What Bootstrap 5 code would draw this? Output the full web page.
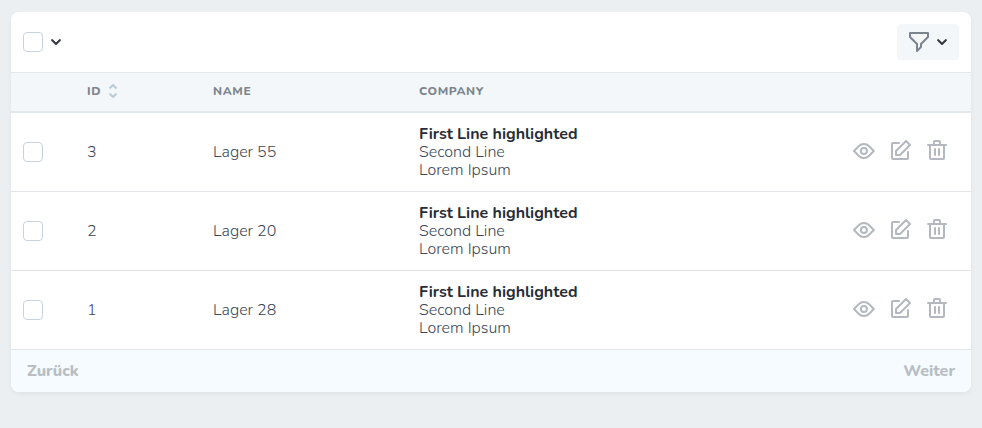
<!DOCTYPE html>
<html lang="de">
<head>
<meta charset="utf-8">
<meta name="viewport" content="width=device-width, initial-scale=1">
<title>Lager</title>
<link href="https://cdn.jsdelivr.net/npm/bootstrap@5.3.0/dist/css/bootstrap.min.css" rel="stylesheet">
<style>
body { background: #ebeff2; font-family: Nunito, "Open Sans", "Noto Sans", sans-serif; font-size: 16px; line-height: 18px; color: #3c4655; padding: 12px 11px; }
.panel { border-radius: 8px; background: #fff; box-shadow: 0 2px 4px rgba(0,0,0,.05); overflow: hidden; }
.toolbar { padding: 12px; }
.panel .form-check-input { width: 20px; height: 20px; margin: 0; border: 1px solid #c9d3dd; border-radius: 4px; float: none; display: block; }
.plain-btn { border: 0; background: transparent; padding: 0; display: flex; align-items: center; color: #3c4b5f; }
.filter-btn { background: #f3f7fa; border-radius: 4px; height: 36px; padding: 0 12px; gap: 8px; }
.panel svg { display: block; fill: currentColor; }
.filter-icon { color: #7c858e; }
.caret { color: #35393f; }
.data { table-layout: fixed; line-height: 18px; color: #3c4655; font-weight: 300; }
.data th { background: #f3f7fa; border-top: 1px solid #e2e7eb; border-bottom: 2px solid #e2e7eb; color: #7c858e; font-size: 12px; font-weight: 800; letter-spacing: .05em; line-height: 16px; padding: 10px 12px 12px; }
.data td { border-bottom: 1px solid #e2e5e8; padding: 12px; vertical-align: middle; color: inherit; background: #fff; }
.data strong { font-weight: 700; color: #252d37; }
.c-check { width: 64px; }
.c-id { width: 126px; }
.c-name { width: 206px; }
.c-act { width: 132px; }
.sort-btn { font: inherit; letter-spacing: inherit; color: inherit; gap: 8px; line-height: 16px; }
.sort-btn svg { color: #bacad6; }
.actions { gap: 16px; padding: 0 12px 4px 0; }
.actions .plain-btn { color: #b3b9bf; }
.pager { background: #f6fbff; padding: 12px 16px; }
.pager .plain-btn { font-weight: 800; color: #b8bec4; line-height: 18px; }
</style>
<script src="https://cdn.jsdelivr.net/npm/bootstrap@5.3.0/dist/js/bootstrap.bundle.min.js"></script>
</head>
<body>
<svg class="d-none" aria-hidden="true">
<symbol id="caret" viewBox="0 0 10 6"><path d="M8.3.3a1 1 0 0 1 1.4 1.4l-4 4a1 1 0 0 1-1.4 0l-4-4A1 1 0 0 1 1.7.3L5 3.6z"/></symbol>
<symbol id="eye" viewBox="0 -2 22 18"><path d="M16.56 13.66a8 8 0 0 1-11.32 0L.3 8.7a1 1 0 0 1 0-1.42l4.95-4.95a8 8 0 0 1 11.32 0l4.95 4.95a1 1 0 0 1 0 1.42l-4.95 4.95-.01.01zm-9.9-1.42a6 6 0 0 0 8.48 0L19.38 8l-4.24-4.24a6 6 0 0 0-8.48 0L2.4 8l4.25 4.24h.01zM10.9 12a4 4 0 1 1 0-8 4 4 0 0 1 0 8zm0-2a2 2 0 1 0 0-4 2 2 0 0 0 0 4z"/></symbol>
<symbol id="edit" viewBox="0 0 20 20"><path d="M4.3 10.3l10-10a1 1 0 0 1 1.4 0l4 4a1 1 0 0 1 0 1.4l-10 10a1 1 0 0 1-.7.3H5a1 1 0 0 1-1-1v-4a1 1 0 0 1 .3-.7zM6 14h2.59l9-9L15 2.41l-9 9V14zm10-2a1 1 0 0 1 2 0v6a2 2 0 0 1-2 2H2a2 2 0 0 1-2-2V4c0-1.1.9-2 2-2h6a1 1 0 1 1 0 2H2v14h14v-6z"/></symbol>
<symbol id="trash" viewBox="0 0 20 20"><path d="M6 4V2a2 2 0 0 1 2-2h4a2 2 0 0 1 2 2v2h5a1 1 0 0 1 0 2h-1v12a2 2 0 0 1-2 2H4a2 2 0 0 1-2-2V6H1a1 1 0 1 1 0-2h5zM4 6v12h12V6H4zm8-2V2H8v2h4zM8 8a1 1 0 0 1 1 1v6a1 1 0 0 1-2 0V9a1 1 0 0 1 1-1zm4 0a1 1 0 0 1 1 1v6a1 1 0 0 1-2 0V9a1 1 0 0 1 1-1z"/></symbol>
</svg>
<main class="panel">
  <div class="toolbar d-flex align-items-center justify-content-between">
    <div class="d-flex align-items-center gap-2">
      <input class="form-check-input" type="checkbox" aria-label="Alle auswählen">
      <button class="plain-btn caret" type="button" aria-label="Auswahlmenü"><svg width="10" height="6"><use href="#caret"/></svg></button>
    </div>
    <button class="plain-btn filter-btn" type="button" aria-label="Filter">
      <svg class="filter-icon" width="20" height="20" viewBox="0 0 20 20"><path d="M.293 5.707A1 1 0 0 1 0 4.999V1A1 1 0 0 1 1 0h18a1 1 0 0 1 1 1v4a1 1 0 0 1-.293.707L13 12.413v2.585a1 1 0 0 1-.293.708l-4 4c-.63.629-1.707.183-1.707-.708v-6.585L.293 5.707zM2 2v2.585l6.707 6.707a1 1 0 0 1 .293.707v4.585l2-2V12a1 1 0 0 1 .293-.707L18 4.585V2H2z"/></svg>
      <svg class="caret" width="10" height="6"><use href="#caret"/></svg>
    </button>
  </div>
  <table class="table data mb-0">
    <colgroup><col class="c-check"><col class="c-id"><col class="c-name"><col><col class="c-act"></colgroup>
    <thead><tr>
      <th></th>
      <th scope="col"><button class="plain-btn sort-btn" type="button">ID <svg width="8" height="14" viewBox="0 0 8 14" aria-hidden="true"><path d="M1.7 4.7A1 1 0 0 1 .3 3.3l3-3a1 1 0 0 1 1.4 0l3 3a1 1 0 0 1-1.4 1.4L4 2.4zM6.3 9.3a1 1 0 0 1 1.4 1.4l-3 3a1 1 0 0 1-1.4 0l-3-3a1 1 0 0 1 1.4-1.4L4 11.6z"/></svg></button></th>
      <th scope="col">NAME</th><th scope="col">COMPANY</th><th></th>
    </tr></thead>
    <tbody>
    <tr><td><input class="form-check-input" type="checkbox" aria-label="3 auswählen"></td><td>3</td><td>Lager 55</td><td><strong>First Line highlighted</strong><br>Second Line<br>Lorem Ipsum</td>
      <td><div class="actions d-flex justify-content-end"><button class="plain-btn" type="button" aria-label="Ansehen"><svg width="22" height="18"><use href="#eye"/></svg></button><button class="plain-btn" type="button" aria-label="Bearbeiten"><svg width="20" height="20"><use href="#edit"/></svg></button><button class="plain-btn" type="button" aria-label="Löschen"><svg width="20" height="20"><use href="#trash"/></svg></button></div></td></tr>
    <tr><td><input class="form-check-input" type="checkbox" aria-label="2 auswählen"></td><td>2</td><td>Lager 20</td><td><strong>First Line highlighted</strong><br>Second Line<br>Lorem Ipsum</td>
      <td><div class="actions d-flex justify-content-end"><button class="plain-btn" type="button" aria-label="Ansehen"><svg width="22" height="18"><use href="#eye"/></svg></button><button class="plain-btn" type="button" aria-label="Bearbeiten"><svg width="20" height="20"><use href="#edit"/></svg></button><button class="plain-btn" type="button" aria-label="Löschen"><svg width="20" height="20"><use href="#trash"/></svg></button></div></td></tr>
    <tr><td><input class="form-check-input" type="checkbox" aria-label="1 auswählen"></td><td>1</td><td>Lager 28</td><td><strong>First Line highlighted</strong><br>Second Line<br>Lorem Ipsum</td>
      <td><div class="actions d-flex justify-content-end"><button class="plain-btn" type="button" aria-label="Ansehen"><svg width="22" height="18"><use href="#eye"/></svg></button><button class="plain-btn" type="button" aria-label="Bearbeiten"><svg width="20" height="20"><use href="#edit"/></svg></button><button class="plain-btn" type="button" aria-label="Löschen"><svg width="20" height="20"><use href="#trash"/></svg></button></div></td></tr>
    </tbody>
  </table>
  <nav class="pager d-flex justify-content-between" aria-label="Seiten">
    <button class="plain-btn" type="button">Zurück</button><button class="plain-btn" type="button">Weiter</button>
  </nav>
</main>
</body>
</html>
